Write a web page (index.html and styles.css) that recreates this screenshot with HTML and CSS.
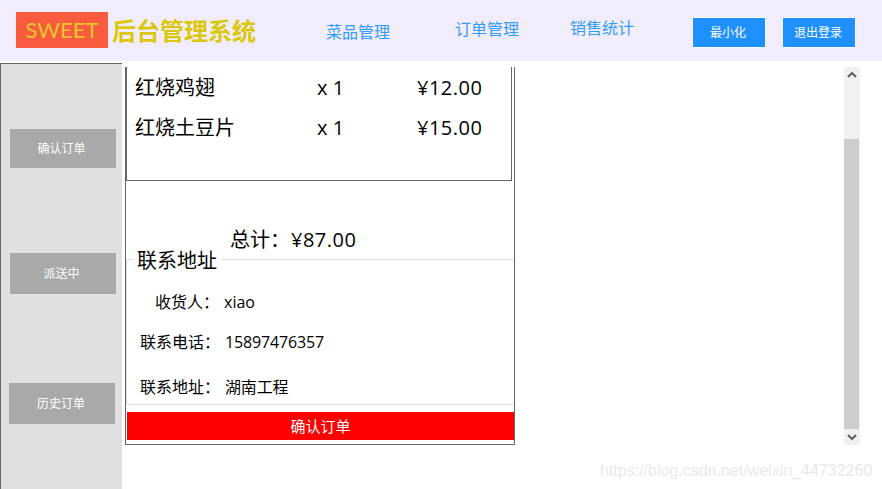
FILE: index.html
```html
<!DOCTYPE html>
<html lang="zh-CN">
<head>
<meta charset="utf-8">
<title>后台管理系统</title>
<link rel="stylesheet" href="styles.css">
</head>
<body>
<header class="header">
  <div class="logo">SWEET</div>
  <div class="title">后台管理系统</div>
  <nav class="nav">
    <a class="nav-a">菜品管理</a>
    <a class="nav-b">订单管理</a>
    <a class="nav-c">销售统计</a>
  </nav>
  <button class="top-btn btn-min">最小化</button>
  <button class="top-btn">退出登录</button>
</header>
<div class="main">
  <aside class="sidebar">
    <button class="side-btn s1">确认订单</button>
    <button class="side-btn s2">派送中</button>
    <button class="side-btn s3">历史订单</button>
  </aside>
  <section class="content">
    <div class="panel">
      <div class="items">
        <div class="item"><span class="name">红烧鸡翅</span><span class="qty">x 1</span><span class="price">¥12.00</span></div>
        <div class="item"><span class="name">红烧土豆片</span><span class="qty">x 1</span><span class="price">¥15.00</span></div>
      </div>
      <div class="total">总计：<span class="price total-price">¥87.00</span></div>
      <fieldset class="address">
        <legend>联系地址</legend>
        <div class="row r1"><span class="label">收货人：</span><span class="val-a">xiao</span></div>
        <div class="row r2"><span class="label">联系电话：</span><span class="val">15897476357</span></div>
        <div class="row r3"><span class="label">联系地址：</span><span class="val">湖南工程</span></div>
      </fieldset>
      <button class="confirm">确认订单</button>
    </div>
    <div class="scrollbar">
      <div class="arrow"><svg width="10" height="8" viewBox="0 0 10 8"><path d="M1 6 L5 2 L9 6" fill="none" stroke="#606060" stroke-width="2"/></svg></div>
      <div class="track"></div>
      <div class="thumb"></div>
      <div class="arrow"><svg width="10" height="8" viewBox="0 0 10 8"><path d="M1 2 L5 6 L9 2" fill="none" stroke="#606060" stroke-width="2"/></svg></div>
    </div>
  </section>
</div>
<div class="watermark">https://blog.csdn.net/weixin_44732260</div>
</body>
</html>
```
FILE: styles.css
```css
* { box-sizing: border-box; }
html, body { margin: 0; padding: 0; }
body {
  width: 882px;
  height: 489px;
  overflow: hidden;
  position: relative;
  background: #fff;
  color: #000;
  font-family: "Open Sans", "Noto Sans CJK SC", sans-serif;
}
button { font-family: inherit; border: 0; padding: 0; color: #fff; }

.header {
  height: 61px;
  background: #f2edfe;
  display: flex;
  align-items: flex-start;
}
.logo {
  width: 92px;
  height: 36px;
  margin: 12px 0 0 16px;
  background: #f95b3e;
  color: #e7c52c;
  font-family: "Lato", sans-serif;
  font-size: 22px;
  line-height: 36px;
  text-align: center;
}
.title {
  margin: 13px 0 0 4px;
  font-size: 24px;
  line-height: 36px;
  font-weight: 700;
  color: #dcc80a;
}
.nav { display: flex; width: 436px; font-size: 16px; color: #329cff; line-height: 22px; }
.nav-a { margin: 21px 0 0 70px; }
.nav-b { margin: 18px 0 0 65px; }
.nav-c { margin: 17px 0 0 51px; }
.top-btn {
  width: 74px;
  height: 31px;
  margin-top: 17px;
  background: #1e90ff;
  border: 1px solid #fff;
  font-size: 12px;
  padding: 0 2px 2px 0;
}
.btn-min { margin-right: 16px; }

.main { display: flex; height: 426px; margin-top: 2px; }
.sidebar {
  width: 122px;
  background: #e0e0e0;
  border-top: 1px solid #666;
  border-left: 1px solid #666;
  display: flex;
  flex-direction: column;
  font-size: 12px;
}
.side-btn { width: 106px; background: #a9a9a9; font-size: 12px; margin-left: 9px; padding: 0 3px 2px 0; }
.s1 { height: 39px; margin-top: 65px; }
.s2 { height: 41px; margin-top: 85px; }
.s3 { height: 41px; margin-top: 89px; margin-left: 8px; padding-right: 2px; }

.content { flex: 1; display: flex; align-items: flex-start; padding: 4px 0 0 3px; }
.panel {
  width: 390px;
  height: 378px;
  border: 1px solid #666;
  border-top: 0;
  display: flex;
  flex-direction: column;
}
.items {
  width: 386px;
  height: 114px;
  border: 1px solid #666;
  border-top: 0;
  padding: 1px 0 0 8px;
  font-size: 20px;
  line-height: 40px;
}
.item { display: flex; }
.name { width: 182px; }
.qty { width: 100px; }
.price { letter-spacing: 0.5px; }
.total-price { margin-left: 1px; }
.total {
  margin: 48px 0 0 104px;
  font-size: 20px;
  line-height: 22px;
}
.address {
  margin: -5px 0 0;
  padding: 0;
  height: 159px;
  border: 0;
  border-top: 1px solid #ddd;
  border-left: 1px solid #ddd;
  border-bottom: 1px solid #ddd;
  min-width: 0;
}
.address legend {
  margin-left: 6px;
  padding: 4px 5px 0 4px;
  font-size: 20px;
  line-height: 22px;
}
.row { display: flex; font-size: 16px; line-height: 22px; margin-left: 13px; }
.r1 { margin-top: 19px; margin-left: 28px; }
.r2 { margin-top: 18px; }
.r3 { margin-top: 23px; }
.label { white-space: nowrap; }
.val-a { margin-left: 5px; }
.val { margin-left: 5px; letter-spacing: -0.15px; }
.confirm {
  width: 387px;
  height: 28px;
  margin: 7px 0 0 1px;
  padding-bottom: 2px;
  background: #f00;
  font-size: 15px;
}
.scrollbar {
  width: 16px;
  height: 378px;
  margin-left: 329px;
  display: flex;
  flex-direction: column;
  background: #f0f0f0;
}
.arrow { height: 16px; display: flex; align-items: center; justify-content: center; flex: none; }
.track { height: 56px; flex: none; }
.thumb { flex: 1; background: #cdcdcd; margin-right: 1px; }
.watermark {
  position: absolute;
  left: 600px;
  top: 462px;
  font-family: "Liberation Sans", sans-serif;
  font-size: 16px;
  line-height: 18px;
  color: #e9e9e9;
}
```
